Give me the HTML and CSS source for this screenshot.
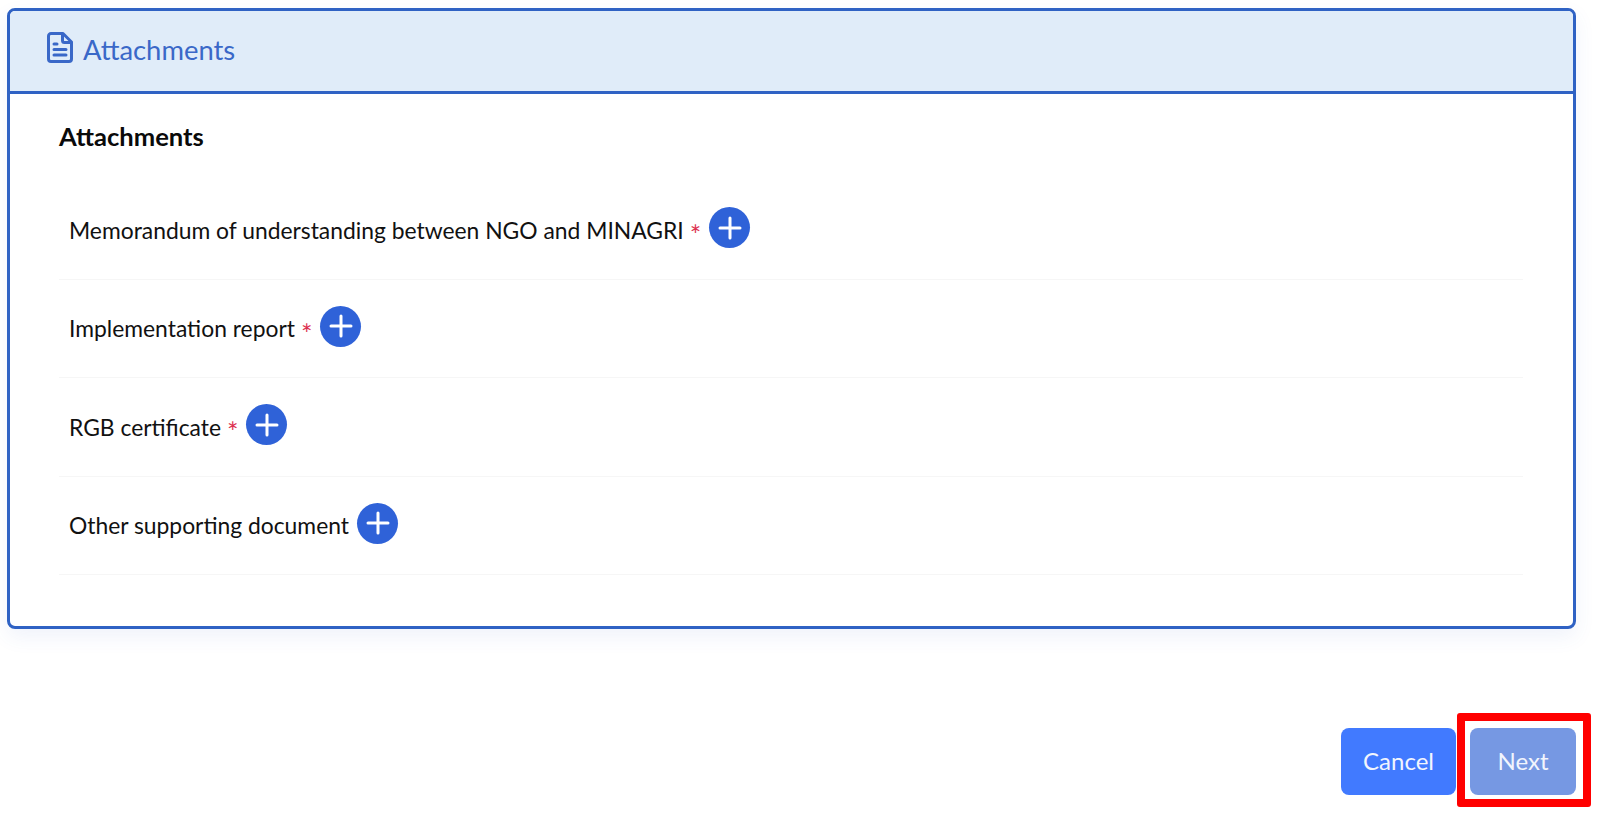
FILE: index.html
```html
<!DOCTYPE html>
<html lang="en">
<head>
<meta charset="UTF-8">
<meta name="viewport" content="width=device-width, initial-scale=1.0">
<title>Attachments</title>
<link rel="stylesheet" href="styles.css">
</head>
<body>
    <section class="card">
        <header class="card-header">
            <svg class="header-icon" viewBox="0 0 26 31" fill="none" stroke="currentColor" stroke-width="3" stroke-linecap="round" stroke-linejoin="round">
                <path d="M4 1.500h12l8.500 8.500v17a2.500 2.500 0 0 1-2.500 2.500H4A2.500 2.500 0 0 1 1.500 27V4A2.500 2.500 0 0 1 4 1.500z"/>
                <path d="M15.500 2v6.500a2 2 0 0 0 2 2H24"/>
                <path d="M7 12h3M7 17.500h12M7 23h12"/>
            </svg>
            <h1>Attachments</h1>
        </header>
        <div class="card-body">
            <h2>Attachments</h2>
            <div class="row">
                <span>Memorandum of understanding between NGO and MINAGRI</span>
                <span class="req">*</span>
                <button class="add"><svg viewBox="0 0 24 24"><path d="M12 2v20M2 12h20"/></svg></button>
            </div>
            <div class="row">
                <span>Implementation report</span>
                <span class="req">*</span>
                <button class="add"><svg viewBox="0 0 24 24"><path d="M12 2v20M2 12h20"/></svg></button>
            </div>
            <div class="row">
                <span>RGB certificate</span>
                <span class="req">*</span>
                <button class="add"><svg viewBox="0 0 24 24"><path d="M12 2v20M2 12h20"/></svg></button>
            </div>
            <div class="row">
                <span>Other supporting document</span>
                <button class="add"><svg viewBox="0 0 24 24"><path d="M12 2v20M2 12h20"/></svg></button>
            </div>
        </div>
    </section>
    <footer class="actions">
        <button class="btn cancel">Cancel</button>
        <div class="next-wrap">
            <button class="btn next">Next</button>
            <div class="highlight"></div>
        </div>
    </footer>
</body>
</html>
```

FILE: styles.css
```css
body, html {
    margin: 0;
    padding: 0;
    background-color: #fff;
}
body {
    padding: 8px 24px 0 7px;
    font-family: 'Lato', 'Open Sans', sans-serif;
    color: #111;
    height: 819px;
    overflow: hidden;
}
.card {
    height: 621px;
    box-sizing: border-box;
    border: 3px solid #2f62c4;
    border-radius: 8px;
    box-shadow: 0 8px 20px rgba(60, 100, 200, 0.08);
}
.card-header {
    display: flex;
    align-items: center;
    gap: 10px;
    height: 83px;
    box-sizing: border-box;
    padding: 0 0 4px 37px;
    background-color: #e0ecf9;
    border-bottom: 3px solid #2f62c4;
    border-radius: 5px 5px 0 0;
    color: #3a68c8;
}
.header-icon {
    width: 26px;
    height: 31px;
    margin-bottom: 4px;
}
.card-header h1 {
    margin: 0;
    font-size: 27.400px;
    font-weight: 400;
}
.card-body {
    padding: 27px 50px 0 49px;
}
.card-body h2 {
    margin: 0 0 30px;
    font-size: 25.600px;
    line-height: 30px;
    font-weight: 700;
    color: #0a0a0a;
}
.row {
    display: flex;
    align-items: center;
    height: 98.500px;
    box-sizing: border-box;
    padding: 0 0 0 10px;
    border-bottom: 1px solid #f6f6f6;
    font-size: 22.850px;
}
.req {
    margin-left: 6px;
    padding-top: 10px;
    color: #dc3050;
    font-size: 27px;
}
.add {
    display: flex;
    align-items: center;
    justify-content: center;
    width: 41px;
    height: 41px;
    margin: -4px 0 0 8px;
    padding: 0;
    border: none;
    border-radius: 50%;
    background-color: #2f62d8;
}
.add svg {
    width: 24px;
    height: 24px;
    fill: none;
    stroke: #fff;
    stroke-width: 3;
    stroke-linecap: round;
}
.actions {
    display: flex;
    justify-content: flex-end;
    gap: 14px;
    margin-top: 99px;
}
.btn {
    height: 67px;
    padding: 0 0 3px;
    border: none;
    border-radius: 8px;
    color: #f2f5fd;
    font-family: inherit;
    font-size: 24px;
}
.cancel {
    width: 115px;
    background-color: #417aff;
}
.next {
    display: block;
    width: 106px;
    background-color: #7698e3;
}
.next-wrap {
    position: relative;
}
.highlight {
    position: absolute;
    top: -15px;
    left: -13px;
    width: 134px;
    height: 94px;
    box-sizing: border-box;
    border: 8px solid #f00;
    border-radius: 3px;
}
```
